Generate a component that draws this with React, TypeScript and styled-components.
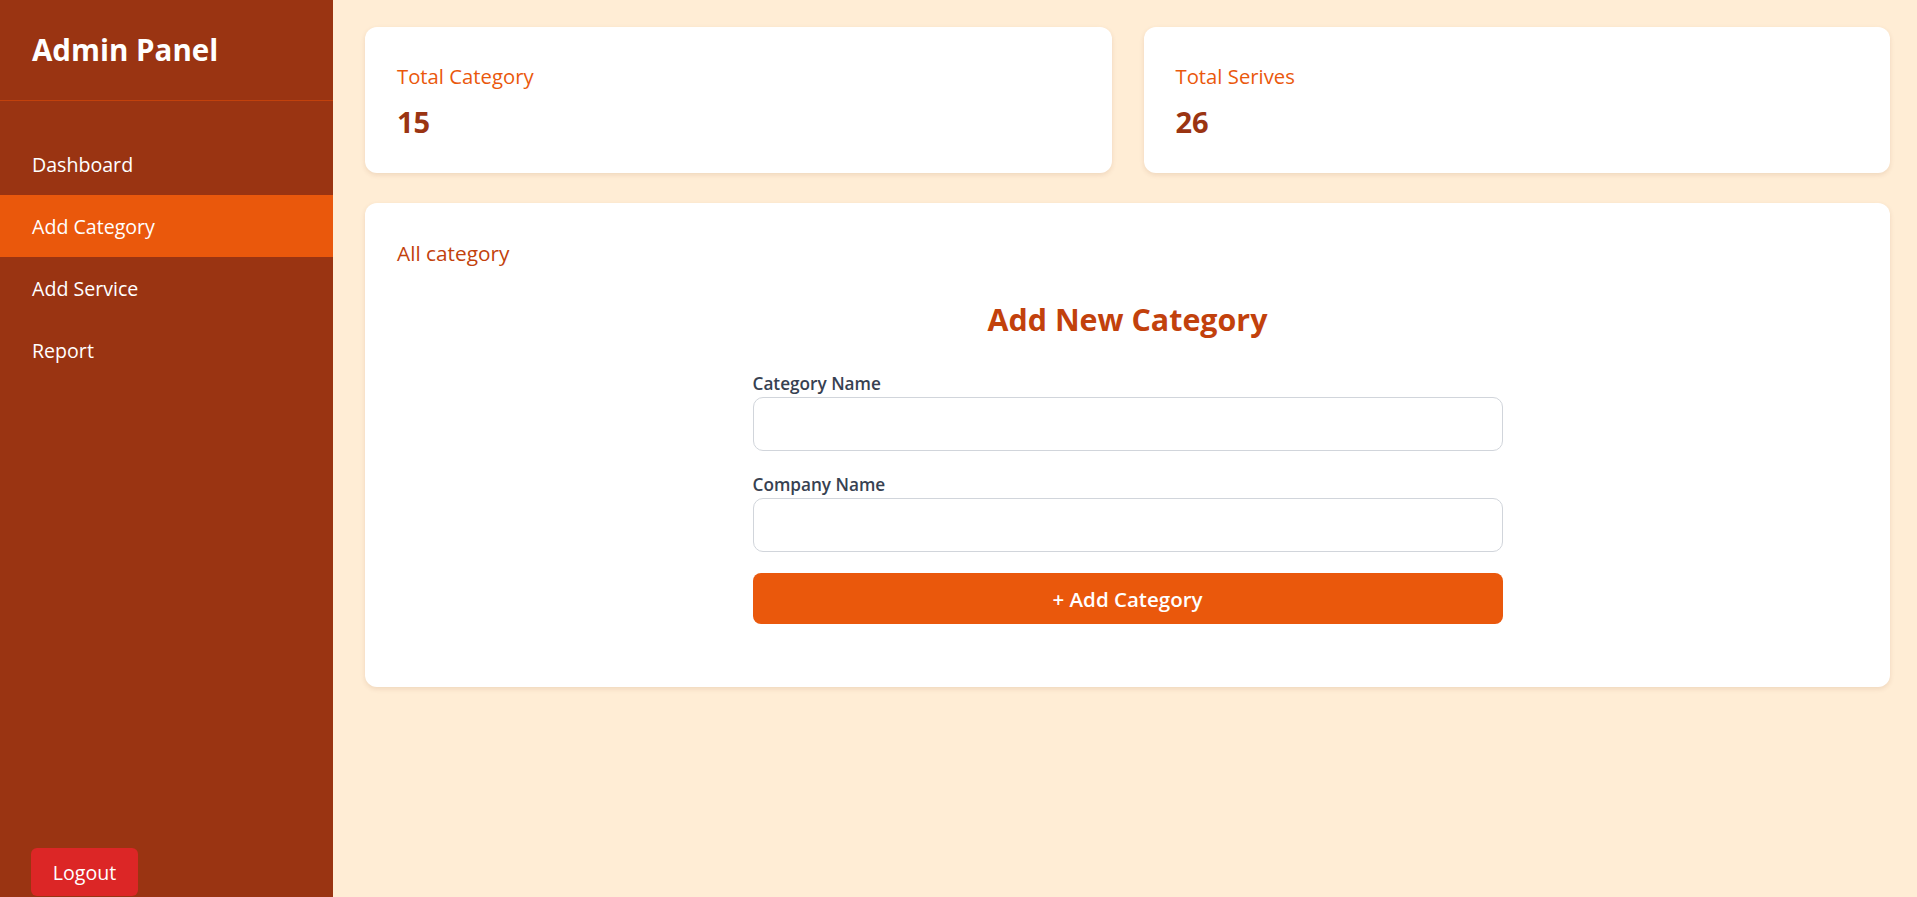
import React from "react";
import styled, { createGlobalStyle } from "styled-components";

const Global = createGlobalStyle`
  * { box-sizing: border-box; }
  html, body { margin: 0; padding: 0; }
  body {
    font-family: "Open Sans", "Noto Sans", sans-serif;
    background: #ffedd5;
  }
`;

const Layout = styled.div`
  display: flex;
  height: 897px;
  overflow: hidden;
`;

const Sidebar = styled.aside`
  width: 333px;
  flex-shrink: 0;
  background: #9a3412;
  color: #ffffff;
  display: flex;
  flex-direction: column;
`;

const Brand = styled.div`
  height: 101px;
  display: flex;
  align-items: center;
  padding: 0 32px 2px;
  border-bottom: 1px solid #c2410c;
  font-size: 29.5px;
  font-weight: 700;
`;

const Nav = styled.nav`
  display: flex;
  flex-direction: column;
  padding-top: 32px;
`;

const NavItem = styled.a<{ $active?: boolean }>`
  display: flex;
  align-items: center;
  height: 62px;
  padding: 0 32px;
  font-size: 19.6px;
  color: #ffffff;
  text-decoration: none;
  background: ${(p) => (p.$active ? "#ea580c" : "transparent")};
  cursor: pointer;
`;

const LogoutButton = styled.button`
  margin: auto 0 1px 31px;
  width: 107px;
  height: 48px;
  border: none;
  border-radius: 6px;
  background: #dc2626;
  color: #ffffff;
  font-family: inherit;
  font-size: 19.6px;
  cursor: pointer;
`;

const Main = styled.main`
  flex: 1;
  padding: 27px 27px 32px 32px;
  display: flex;
  flex-direction: column;
  gap: 30px;
`;

const StatsRow = styled.div`
  display: grid;
  grid-template-columns: 1fr 1fr;
  gap: 32px;
`;

const Card = styled.section`
  background: #ffffff;
  border-radius: 12px;
  box-shadow: 0 2px 5px rgba(120, 60, 20, 0.12);
  padding: 32px;
`;

const StatCard = styled(Card)`
  height: 146px;
  padding-top: 34px;
`;

const StatLabel = styled.div`
  font-size: 20.3px;
  color: #ea580c;
  line-height: 30px;
`;

const StatValue = styled.div`
  margin-top: 13px;
  font-size: 29px;
  font-weight: 700;
  color: #9a3412;
  line-height: 36px;
`;

const PanelCard = styled(Card)`
  height: 484px;
  padding-top: 34px;
`;

const PanelLink = styled.div`
  font-size: 20.8px;
  color: #c2410c;
  line-height: 32px;
`;

const FormTitle = styled.h2`
  margin: 31px 0 0;
  text-align: center;
  font-size: 30.4px;
  font-weight: 700;
  color: #c2410c;
  line-height: 40px;
`;

const Form = styled.form`
  width: 750px;
  margin: 31px auto 0;
  display: flex;
  flex-direction: column;
`;

const Field = styled.div`
  display: flex;
  flex-direction: column;
  margin-bottom: 21px;
`;

const Label = styled.label`
  font-size: 17.2px;
  font-weight: 600;
  color: #374151;
  line-height: 26px;
`;

const Input = styled.input`
  height: 54px;
  border: 1px solid #d1d5db;
  border-radius: 10px;
  padding: 0 14px;
  font-size: 18px;
  font-family: inherit;
  outline: none;
`;

const SubmitButton = styled.button`
  height: 51px;
  border: none;
  border-radius: 8px;
  background: #ea580c;
  color: #ffffff;
  font-family: inherit;
  font-size: 20.5px;
  font-weight: 600;
  cursor: pointer;
`;

export default function App() {
  return (
    <>
      <Global />
      <Layout>
        <Sidebar>
          <Brand>Admin Panel</Brand>
          <Nav>
            <NavItem>Dashboard</NavItem>
            <NavItem $active>Add Category</NavItem>
            <NavItem>Add Service</NavItem>
            <NavItem>Report</NavItem>
          </Nav>
          <LogoutButton>Logout</LogoutButton>
        </Sidebar>
        <Main>
          <StatsRow>
            <StatCard>
              <StatLabel>Total Category</StatLabel>
              <StatValue>15</StatValue>
            </StatCard>
            <StatCard>
              <StatLabel>Total Serives</StatLabel>
              <StatValue>26</StatValue>
            </StatCard>
          </StatsRow>
          <PanelCard>
            <PanelLink>All category</PanelLink>
            <FormTitle>Add New Category</FormTitle>
            <Form onSubmit={(e) => e.preventDefault()}>
              <Field>
                <Label>Category Name</Label>
                <Input type="text" />
              </Field>
              <Field>
                <Label>Company Name</Label>
                <Input type="text" />
              </Field>
              <SubmitButton type="submit">+ Add Category</SubmitButton>
            </Form>
          </PanelCard>
        </Main>
      </Layout>
    </>
  );
}
